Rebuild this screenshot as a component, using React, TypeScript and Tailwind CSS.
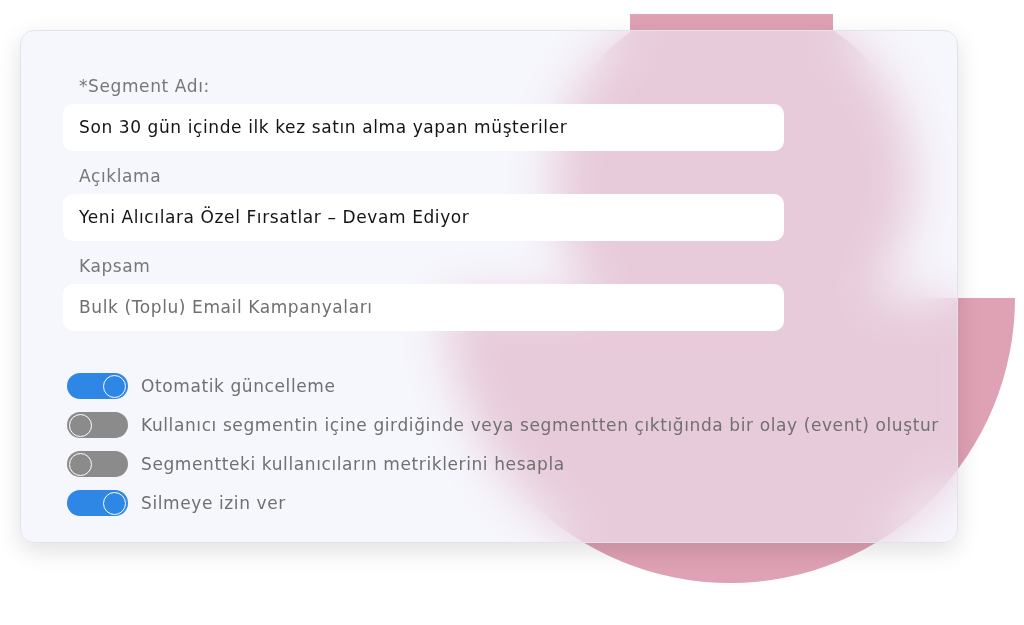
const fields = [
  { label: "*Segment Adı:", value: "Son 30 gün içinde ilk kez satın alma yapan müşteriler", muted: false },
  { label: "Açıklama", value: "Yeni Alıcılara Özel Fırsatlar – Devam Ediyor", muted: false },
  { label: "Kapsam", value: "Bulk (Toplu) Email Kampanyaları", muted: true },
];

const toggles = [
  { label: "Otomatik güncelleme", on: true },
  { label: "Kullanıcı segmentin içine girdiğinde veya segmentten çıktığında bir olay (event) oluştur", on: false },
  { label: "Segmentteki kullanıcıların metriklerini hesapla", on: false },
  { label: "Silmeye izin ver", on: true },
];

function Toggle({ on }: { on: boolean }) {
  return (
    <span
      className={
        on
          ? "flex h-[26px] w-[61px] shrink-0 items-center justify-end rounded-full bg-[#2f87e5] px-[2px]"
          : "flex h-[26px] w-[61px] shrink-0 items-center justify-start rounded-full bg-[#8b8b8b] px-[2px]"
      }
    >
      <span
        className={
          on
            ? "h-[23px] w-[23px] rounded-full border-[1.5px] border-white bg-[#2f87e5]"
            : "h-[23px] w-[23px] rounded-full border-[1.5px] border-white bg-[#8b8b8b]"
        }
      />
    </span>
  );
}

export default function App() {
  return (
    <div
      className="relative h-[625px] w-[1024px] overflow-hidden bg-white pl-[20px] pt-[30px] tracking-[0.6px]"
      style={{ fontFamily: '"DejaVu Sans", "Noto Sans", sans-serif' }}
    >
      {/* pink shapes behind the card */}
      <div className="absolute inset-x-0 bottom-0 top-[14px] overflow-hidden">
        <div className="absolute left-[630px] top-0 h-[110px] w-[203px] bg-[#dfa1b4]" />
        <div className="absolute left-[553px] top-[-14px] h-[360px] w-[360px] rounded-full bg-[#dfa1b4]" />
        <div className="absolute left-[445px] top-[284px] h-[285px] w-[570px] rounded-b-[285px] bg-[#dfa1b4]" />
      </div>

      <div className="relative w-[938px] rounded-[14px] border border-[#e2e2e8] bg-[rgba(238,238,251,0.54)] px-[42px] pb-[26px] pt-[30px] shadow-[0_8px_24px_rgba(0,0,0,0.12)] backdrop-blur-[24px]">
        {fields.map((f) => (
          <div key={f.label}>
            <div className="pb-[6px] pl-[16px] pt-[13px] text-[17px] leading-[24px] text-[#777777]">{f.label}</div>
            <div
              className={
                f.muted
                  ? "flex h-[47px] w-[721px] items-center rounded-[10px] bg-white px-[16px] text-[17px] text-[#6f6f6f]"
                  : "flex h-[47px] w-[721px] items-center rounded-[10px] bg-white px-[16px] text-[17px] text-[#141414]"
              }
            >
              {f.value}
            </div>
          </div>
        ))}

        <div className="mt-[42px] flex flex-col gap-[13px] pl-[4px]">
          {toggles.map((t) => (
            <div key={t.label} className="flex items-center gap-[13px]">
              <Toggle on={t.on} />
              <span className="whitespace-nowrap text-[17px] leading-[26px] text-[#707070]">{t.label}</span>
            </div>
          ))}
        </div>
      </div>
    </div>
  );
}
